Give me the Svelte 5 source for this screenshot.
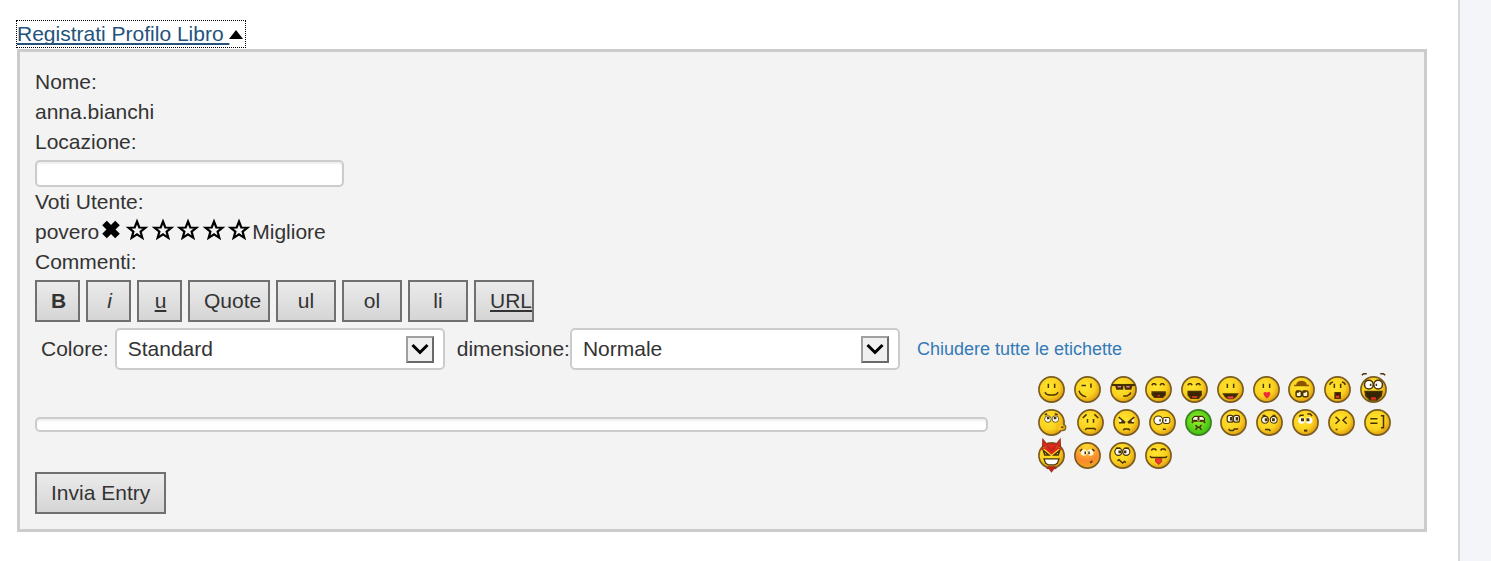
<script>
  let location = $state('');
  let comment = $state('');
  let rating = $state(0);
  let open = $state(true);

  const tools = [
    { text: 'B', kind: 'bold small' },
    { text: 'i', kind: 'italic small' },
    { text: 'u', kind: 'under small' },
    { text: 'Quote', kind: 'wide' },
    { text: 'ul', kind: '' },
    { text: 'ol', kind: '' },
    { text: 'li', kind: '' },
    { text: 'URL', kind: 'under' }
  ];

  const eyes = '<path d="M6.9 5.1v2.9M11.1 5.1v2.9"/>';
  const arcs = '<path d="M4.5 6.2l.9-1.1h1.2l.9 1.1M10 6.2l.9-1.1h1.2l.9 1.1"/>';

  // Each face is drawn on an 18-unit square.
  const faces = [
    [
      { name: 'sorriso', art: eyes + '<path d="M4.6 10.8l1 1.3 1.6.6h3.6l1.6-.6 1-1.3"/>' },
      { name: 'occhiolino', art: '<path d="M5 6.4h3M11.3 5v2.8M3.4 9.8l.7 1.8 1.6 1.4 2.4.9"/>' },
      { name: 'occhiali', art: '<path d="M1.2 6h15.6" stroke-width="1.4"/><path d="M3.8 6h4.6v2.6H4.6zM9.8 6h4.8l-.8 2.6h-3.4z" fill="#222"/><path d="M5 7.1h2.4M10.8 7.1h2.4" stroke="#e8798a" stroke-width="1"/><path d="M8.8 13.4h2.4l2-1.3.6-1.2"/>' },
      { name: 'risata', art: arcs + '<path d="M4.8 10.6h8.6v1.8l-1.6 1.8H6.4l-1.6-1.8z" fill="#3a2500"/><path d="M8.4 13.1h1.6" stroke="#e02828"/>' },
      { name: 'risata forte', art: arcs + '<path d="M4.8 10.4h8.6v2.2l-1.8 2.2H6.6l-1.8-2.2z" fill="#3a2500"/><path d="M7.4 14h3.4" stroke="#e03520" stroke-width="1.2"/>' },
      { name: 'contento', art: eyes + '<path d="M4.4 12h9.2l-1.2 1.8-1.8 1.2H7.4l-1.8-1.2z" fill="#3a2500"/><path d="M7 14.3h4" stroke="#ee4040" stroke-width="1.5"/>' },
      { name: 'bacio', art: eyes + '<path d="M7.3 11.5c.7-1 1.7-.5 2 .5.3-1 1.6-1.4 2-.4.3 1-1.3 2.2-2 3-.7-.8-2.3-2-2-3.1z" fill="#f02b38" stroke="#f02b38" stroke-width=".7"/>' },
      { name: 'sottosopra', art: '<path d="M4.1 6.3h9.8M6 5.6c.5-2.6 5.500-2.6 6 0z" fill="#8a5400" stroke="#8a5400"/><rect x="5.4" y="10" width="3.5" height="3.9" rx="1" fill="#fff6cc"/><rect x="9.8" y="10" width="3.5" height="3.9" rx="1" fill="#fff6cc"/><path d="M5.4 10.500h2M9.8 10.500h2" stroke-width="1.300"/>' },
      { name: 'sorpreso', art: eyes + '<path d="M3.800 5.900l.6-1.200 1.600-.8M14.200 5.900l-.6-1.200-1.600-.8"/><rect x="7.400" y="11.200" width="3.400" height="3.600" fill="#3a1500"/><path d="M8 13.800h2.200" stroke="#e83920" stroke-width="1.500"/>' },
      { name: 'euforico', art: '<path d="M1.200-.6L2.500-1.500h2M16.800-.6l-1.300-.9h-2"/><circle cx="5.900" cy="5.800" r="2.900" fill="#fff"/><circle cx="12.100" cy="5.800" r="2.900" fill="#fff"/><path d="M6.600 5.900h1M10.400 5.900h1" stroke-width="1.400"/><path d="M3.400 10.300h11.200l-.5 3-2.800 2.700H6.700l-2.800-2.700z" fill="#352507"/><path d="M7.400 15h3.200" stroke="#e62d20" stroke-width="1.600"/>' }
    ],
    [
      { name: 'pensieroso', kind: 'broad', art: '<circle cx="16.500" cy="12.300" r="2" fill="#e7b413" stroke="#836421" stroke-width=".9"/><circle cx="14.400" cy="11.600" r="2.500" fill="#f4c11a" stroke="none"/><circle cx="6.600" cy="6.700" r="2.200" fill="#fff" stroke-width=".5"/><circle cx="11.600" cy="6.700" r="2.200" fill="#fff" stroke-width=".5"/><path d="M6.800 5.200v1.600M11.400 5.200v1.600" stroke-width="1.700"/><path d="M4.500 3.900l1.600-.7M11.200 3.200l2 .7M15.500 12.100h1.400"/>' },
      { name: 'triste', art: '<path d="M7 6.600v2.600M11 6.600v2.600M3.800 6l2.600-2.400M14.200 6l-2.600-2.400M5.400 13.900l1-.9h5.200l1 .9"/>' },
      { name: 'arrabbiato', art: '<path d="M3.800 5.600l3.800 3.200H4.500zM14.200 5.600l-3.800 3.200h3.100z" fill="#fff" stroke="none"/><path d="M3.800 5.400l4.400 3.600M14.200 5.400L9.800 9M4 9.200h4M10 9.200h4"/><path d="M6.300 7.700v1.400M11.700 7.700v1.400" stroke-width="1.600"/><path d="M6.800 14.200l.8-.9h2.800l.8.9"/>' },
      { name: 'stupito', art: '<circle cx="6.200" cy="7.500" r="2.900" fill="#fff" stroke-width=".7"/><rect x="9.300" y="5.600" width="4.600" height="4" rx="1.200" fill="#fff" stroke-width=".7"/><path d="M6.900 7.600h1M10.600 7.600h1" stroke-width="1.500"/><path d="M9.200 13.500h2"/>' },
      { name: 'nauseato', kind: 'green', art: '<path d="M5 8V6.300l1.400-1.400h5.200L13 6.300V8z" fill="#fff" stroke-width=".8"/><path d="M5.500 7.800H8M10 7.800h2.500M9 5v2.500" stroke-width="1.300"/><path d="M4.500 9.200l1-.8M13.500 9.200l-1-.8M7 10.600l1.200 1.600h1.600l1.200-1.600M7 13.900l1.200-1.600M11 13.900l-1.200-1.600"/>' },
      { name: 'perplesso', art: '<rect x="4.800" y="4.200" width="4" height="4.600" rx="1.500" fill="#fff" stroke-width=".8"/><rect x="9" y="4.200" width="4" height="4.600" rx="1.500" fill="#fff" stroke-width=".8"/><path d="M7.500 5.400v2.200M11.300 5.400v2.200" stroke-width="1.700"/><path d="M5.700 13.300l1 1h2.100l.8-.9h2.500"/>' },
      { name: 'dubbioso', art: '<circle cx="6" cy="7.200" r="2.300" fill="#fff" stroke-width=".7"/><circle cx="11.800" cy="7.200" r="2.300" fill="#fff" stroke-width=".7"/><path d="M6.800 6.200v2M11.600 6.200v2" stroke-width="1.900"/><path d="M4.400 4.400h2M11 4.400h2M6 13.600h2.600l1 1"/>' },
      { name: 'incredulo', art: '<path d="M4.800 5l1-.9h2M10.200 3.300h2l1.200 1.300"/><circle cx="6.400" cy="7.700" r="2.200" fill="#fff" stroke="none"/><circle cx="11.400" cy="7.700" r="2.200" fill="#fff" stroke="none"/><path d="M7 6.200v2M10.600 6.200v2" stroke-width="2"/><path d="M8 14.400h2.200" stroke-width="1.300"/>' },
      { name: 'dolorante', art: '<path d="M5 5.200l2.500 2.300L5 9.800M12.500 5.200L10 7.500l2.500 2.300M5.100 13.600h1.200"/>' },
      { name: 'furbo', art: '<path d="M4.200 6.500h4.800M4.200 9.500h4.800M11.300 4.500H13v8h-1.700"/>' }
    ],
    [
      { name: 'diavolo', kind: 'devil', art: '<path d="M.8 5.600Q9-1 17.200 5.600L13.500 4.600 9 8.500 4.500 4.600z" fill="#e42718" stroke="none"/><path d="M3 3.400L3.200-1.900l2.400 3h6.800l2.400-3 .2 5.300-3-1L9 6 6 2.400z" fill="#e42718" stroke="#9a3020" stroke-width=".7"/><path d="M7 16.500h4.200l.7 1.200-1.400.2L9 19.900l-1.500-2-1.400-.2z" fill="#d22117" stroke="#9a3020" stroke-width=".7"/><path d="M3.600 5.700l3.700 3H4.500zM14.400 5.700l-3.700 3h2.800z" fill="#fff"/><path d="M4 11.200h10l-1 2.800-1.800 1.300H6.800L5 14z" fill="#fff" stroke-width=".8"/>' },
      { name: 'imbarazzato', kind: 'blush', art: '<circle cx="6.600" cy="7" r="2.100" fill="#fff6d8" stroke="none"/><circle cx="11" cy="7" r="2.100" fill="#fff6d8" stroke="none"/><path d="M7.500 6.300v1.800M10 6.300v1.800M4 6.200l1.400-1.600M12.200 4.600l1.400 1.600M10.800 13.900l1.400-1.200"/>' },
      { name: 'confuso', art: '<circle cx="6.300" cy="6.500" r="2.400" fill="#fff" stroke-width=".8"/><circle cx="11.500" cy="6.500" r="2.400" fill="#fff" stroke-width=".8"/><path d="M7.200 5.700v1.800M10.700 5.700v1.800" stroke-width="1.800"/><path d="M4.600 4.200h3M10.400 4.200h3M5.600 12.600l1.100-.8 1.200 1.200 1.200 1 1.200-1 1 .8"/>' },
      { name: 'linguaccia', art: '<path d="M4.200 5.600l.8-.9h1.800l.8.900M10.400 5.600l.8-.9H13l.8.900M3.300 9.500l1 .9h9.400l1-.9"/><path d="M7 11.100h4.200v2L9.100 15 7 13.100z" fill="#ee3930" stroke="#b71c18" stroke-width=".5"/>' }
    ]
  ];

  const fills = { green: 'url(#green)', blush: 'url(#blush)' };
</script>

<svg class="defs" aria-hidden="true">
  <defs>
    <radialGradient id="gold" cx=".4" cy=".38" r=".68">
      <stop offset="0" stop-color="#ffe62e" />
      <stop offset=".6" stop-color="#fad01f" />
      <stop offset="1" stop-color="#d9920c" />
    </radialGradient>
    <radialGradient id="green" cx=".45" cy=".4" r=".7">
      <stop offset="0" stop-color="#9cf52c" />
      <stop offset="1" stop-color="#28b50c" />
    </radialGradient>
    <radialGradient id="blush" cx=".45" cy=".1" r=".95">
      <stop offset="0" stop-color="#fbd92d" />
      <stop offset=".35" stop-color="#fab42d" />
      <stop offset=".65" stop-color="#fa8730" />
      <stop offset="1" stop-color="#efb018" />
    </radialGradient>
  </defs>
</svg>

<main>
  <a class="toggle" href="#libro" onclick={(e) => { e.preventDefault(); open = !open; }}>
    <span>Registrati Profilo Libro&nbsp;</span><svg viewBox="0 0 14 9" aria-hidden="true"><path d="M0 9L7 0l7 9z" /></svg>
  </a>

  {#if open}
    <form id="libro" onsubmit={(e) => e.preventDefault()}>
      <div class="line">Nome:</div>
      <div class="line">anna.bianchi</div>
      <label class="line" for="location">Locazione:</label>
      <div class="field"><input id="location" type="text" bind:value={location} /></div>
      <div class="line">Voti Utente:</div>
      <div class="line votes">
        <span>povero</span>
        <div class="stars">
          <button type="button" aria-label="Nessun voto" onclick={() => (rating = 0)}>
            <svg viewBox="0 0 22 22"><path d="M3.500 3.500L10 10M16.500 3.500L10 10M3.500 16.500L10 10M16.500 16.500L10 10" transform="translate(0 .5)" stroke="#000" stroke-width="6.500" /></svg>
          </button>
          {#each [1, 2, 3, 4, 5] as n}
            <button type="button" aria-label={`Voto ${n}`} onclick={() => (rating = n)}>
              <svg viewBox="0 0 22 22"><path d="M11 2.500l2.300 6 6.100.2-4.800 3.900 1.700 6.200L11 15.300l-5.300 3.500 1.700-6.200-4.800-3.900 6.100-.2z" fill={n <= rating ? '#000' : '#f3f3f3'} stroke="#000" stroke-width="2.200" /></svg>
            </button>
          {/each}
        </div>
        <span>Migliore</span>
      </div>
      <label class="line" for="comment">Commenti:</label>

      <div class="tools">
        {#each tools as tool}
          <button type="button" class="btn {tool.kind}">{tool.text}</button>
        {/each}
      </div>

      <div class="options">
        <label for="colour">Colore:</label>
        <div class="select">
          <select id="colour"><option>Standard</option></select>
          <svg viewBox="0 0 24 23" aria-hidden="true"><path d="M4.500 7L12 14.500 19.500 7" /></svg>
        </div>
        <label class="second" for="size">dimensione:</label>
        <div class="select flush">
          <select id="size"><option>Normale</option></select>
          <svg viewBox="0 0 24 23" aria-hidden="true"><path d="M4.500 7L12 14.500 19.500 7" /></svg>
        </div>
        <a href="#comment">Chiudere tutte le etichette</a>
      </div>

      <div class="writing">
        <textarea id="comment" rows="1" bind:value={comment}></textarea>
        <div class="faces">
          {#each faces as row, r}
            <div class="row row{r + 1}">
              {#each row as face}
                <button type="button" class={face.kind} aria-label={face.name}>
                  <svg viewBox="0 0 18 18">
                    <circle cx="9" cy="9" r="8.400" fill={fills[face.kind] ?? 'url(#gold)'} stroke={face.kind === 'green' ? '#3d7c22' : '#7a5c20'} stroke-width="1.100" />
                    <g fill="none" stroke="#4a3200" stroke-width="1">{@html face.art}</g>
                  </svg>
                </button>
              {/each}
            </div>
          {/each}
        </div>
      </div>

      <button type="submit" class="btn submit">Invia Entry</button>
    </form>
  {/if}
</main>

<style>
  :global(body) {
    background: #f3f5f8;
  }
  * {
    box-sizing: border-box;
  }
  main {
    min-height: 100vh;
    margin-right: 31px;
    padding: 19px 31px 29px 17px;
    border-right: 2px solid #d8d8d8;
    background: #fff;
    color: #333;
    font: 21px/30px 'Liberation Sans', Arial, sans-serif;
  }
  button, input, select, textarea {
    margin: 0;
    font: inherit;
    color: inherit;
  }
  svg {
    display: block;
    overflow: visible;
  }
  .defs {
    position: absolute;
    width: 0;
    height: 0;
  }
  .toggle {
    display: flex;
    align-items: center;
    width: fit-content;
    height: 26px;
    margin: 2px 0;
    padding-right: 2px;
    color: #23527c;
    text-decoration: none;
    outline: 1px dotted #000;
  }
  .toggle span {
    text-decoration: underline;
    text-decoration-thickness: 2px;
    text-underline-offset: 2px;
    text-decoration-skip-ink: none;
  }
  .toggle svg {
    width: 14px;
    height: 9px;
    fill: #000;
  }
  form {
    padding: 15px;
    border: 3px solid #ccc;
    background: #f3f3f3;
  }
  .line {
    display: block;
    height: 30px;
  }
  .field {
    display: flex;
    height: 30px;
    padding-top: 3px;
  }
  input, textarea, select {
    border: 2px solid #ccc;
    border-radius: 5px;
    background: #fff;
  }
  input, textarea {
    box-shadow: inset 0 2px 2px #0001;
  }
  input {
    width: 309px;
    height: 27px;
    padding: 0 6px;
  }
  .votes {
    display: flex;
  }
  .stars {
    display: flex;
    width: 153px;
  }
  .stars button {
    display: flex;
    flex: 1;
    justify-content: center;
    padding: 2px 0 0;
    border: 0;
    background: none;
  }
  .stars svg {
    width: 22px;
    height: 22px;
  }
  .tools {
    display: flex;
    gap: 6px;
    margin-top: 3px;
  }
  .btn {
    width: 60px;
    height: 42px;
    padding: 0 14px;
    overflow: hidden;
    border: 2px solid #707070;
    background: linear-gradient(#ebebeb, #d5d5d5);
  }
  .small {
    width: 45px;
    padding: 0 12px 0 14px;
  }
  .wide {
    width: 82px;
  }
  .bold {
    font-weight: bold;
  }
  .italic {
    font-style: italic;
  }
  .under {
    text-decoration: underline;
    text-decoration-thickness: 2px;
    text-underline-offset: 2px;
  }
  .options {
    display: flex;
    align-items: center;
    margin-top: 6px;
    padding-left: 6px;
  }
  .select {
    position: relative;
    width: 330px;
    margin-left: 6px;
  }
  .flush {
    margin-left: 0;
  }
  select {
    display: block;
    width: 100%;
    height: 42px;
    padding: 0 40px 0 11px;
    appearance: none;
  }
  .select svg {
    position: absolute;
    top: 8px;
    right: 11px;
    width: 28px;
    height: 27px;
    border: 2px solid #696969;
    border-top-color: #a0a0a0;
    border-left-color: #a0a0a0;
    background: #f0f0f0;
    fill: none;
    stroke: #000;
    stroke-width: 3;
    pointer-events: none;
  }
  .second {
    margin-left: 12px;
  }
  .options a {
    margin-left: 17px;
    font-size: 18px;
    color: #337ab7;
    text-decoration: none;
  }
  .writing {
    display: grid;
    grid-template-columns: 1fr 371px;
    gap: 50px;
    align-items: center;
    margin-top: 6px;
  }
  textarea {
    display: block;
    width: 100%;
    height: 15px;
    padding: 0;
    overflow: hidden;
    resize: none;
  }
  .faces {
    display: flex;
    flex-direction: column;
    gap: 6px;
    padding-bottom: 3px;
  }
  .row {
    display: flex;
    justify-content: space-between;
  }
  .row button {
    display: block;
    width: 27px;
    height: 27px;
    padding: 0;
    border: 0;
    background: none;
  }
  .row button.broad {
    width: 30px;
  }
  .row svg {
    width: 27px;
    height: 27px;
  }
  .row1 {
    width: 349px;
  }
  .row2 {
    width: 353px;
  }
  .row3 {
    width: 134px;
  }
  .submit {
    display: block;
    width: auto;
  }
</style>
